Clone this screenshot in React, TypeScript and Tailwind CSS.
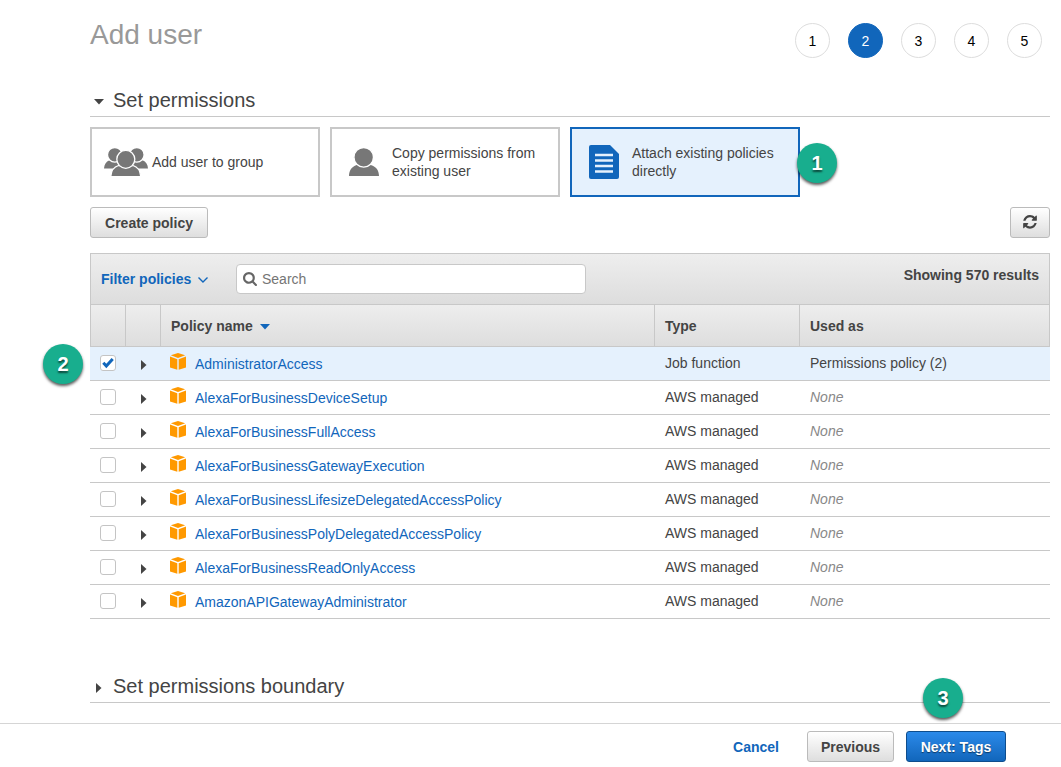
import React from "react";

const policies = [
  { name: "AdministratorAccess", type: "Job function", used: "Permissions policy (2)" },
  { name: "AlexaForBusinessDeviceSetup", type: "AWS managed" },
  { name: "AlexaForBusinessFullAccess", type: "AWS managed" },
  { name: "AlexaForBusinessGatewayExecution", type: "AWS managed" },
  { name: "AlexaForBusinessLifesizeDelegatedAccessPolicy", type: "AWS managed" },
  { name: "AlexaForBusinessPolyDelegatedAccessPolicy", type: "AWS managed" },
  { name: "AlexaForBusinessReadOnlyAccess", type: "AWS managed" },
  { name: "AmazonAPIGatewayAdministrator", type: "AWS managed" },
];

function Badge({ n, className }: { n: number; className: string }) {
  return (
    <span
      className={`absolute z-10 flex size-10 items-center justify-center rounded-full bg-[#18ae8e] text-xl font-bold text-white shadow-[0_2px_3px_rgba(0,0,0,0.65)] [text-shadow:0_2px_2px_rgba(0,0,0,0.6)] ${className}`}
    >
      {n}
    </span>
  );
}

function UserIcon() {
  return (
    <svg className="h-7 w-[30px]" viewBox="0 0 30 28" fill="#777" aria-hidden="true">
      <path d="M7 17.200Q14.700 14 22.500 17.200C27.500 18.800 30 23 30 28H0C0 23 2.500 18.800 7 17.200z" />
      <circle cx="14.700" cy="9.300" r="9.800" stroke="#fff" strokeWidth="1.400" />
    </svg>
  );
}

function GroupIcon() {
  return (
    <svg className="h-7 w-11" viewBox="0 0 44 28" aria-hidden="true">
      <g fill="#777">
        <path d="M0 20.500c.2-4 2-7 5.500-8.300h10V20.500z" />
        <path d="M44 20.500c-.2-4-2-7-5.500-8.300h-10V20.500z" />
      </g>
      <g fill="#777" stroke="#fff" strokeWidth="1.300">
        <circle cx="10.800" cy="6.800" r="7.300" />
        <circle cx="32.800" cy="6.800" r="7.300" />
        <path d="M6.800 29c.2-5.500 2.700-9.900 7.700-11.500h14.500c5 1.600 7.500 6 7.700 11.500z" />
        <circle cx="21.800" cy="11.300" r="9" />
      </g>
    </svg>
  );
}

function DocIcon() {
  return (
    <svg className="h-[34px] w-[30px]" viewBox="0 0 30 34" aria-hidden="true">
      <path d="M2 0h19l9 9v23a2 2 0 0 1-2 2H2a2 2 0 0 1-2-2V2a2 2 0 0 1 2-2z" fill="#1166bb" />
      <path d="M6 10h18M6 15.500h18M6 21h18M6 26.500h18" stroke="#e5f1fd" strokeWidth="2.400" />
    </svg>
  );
}

function CubeIcon() {
  return (
    <svg className="h-[17px] w-4" viewBox="0 0 16 17" fill="#ff9900" aria-hidden="true">
      <path d="M0 3.400L7.300 6.300V16.700L0 14.400z" />
      <path d="M16 3.400L8.700 6.300V16.700L16 14.400z" />
      <path d="M.8 2.200L8 0l7.200 2.200L8 4.900z" />
    </svg>
  );
}

function RightArrow() {
  return (
    <svg className="h-[10px] w-[6px]" viewBox="0 0 6 10" fill="#444" aria-hidden="true">
      <path d="M0 0l5.500 5L0 10z" />
    </svg>
  );
}

function DownArrow() {
  return (
    <svg className="h-[6px] w-[10px]" viewBox="0 0 10 6" fill="currentColor" aria-hidden="true">
      <path d="M0 0h10L5 5.500z" />
    </svg>
  );
}

const grayButton =
  "flex h-[31px] items-center justify-center rounded-[3px] border border-[#bbb] bg-linear-to-b from-white to-[#dedede] font-bold text-[#444]";
const headCell = "border-y border-r border-[#c8c8c8] p-0 text-left font-bold";
const bar = "bg-linear-to-b from-[#eeeeee] to-[#dddddd]";

export default function App() {
  return (
    <div className="bg-white font-['Liberation_Sans',Arial,sans-serif] text-sm text-[#444]">
      <main className="pr-[11px] pl-[90px]">
        <header className="flex h-[84px] items-start justify-between">
          <h1 className="pt-[19px] text-[28px] leading-8 text-[#999]">Add user</h1>
          <ol className="flex gap-[18px] pt-[23px] pr-2">
            {[1, 2, 3, 4, 5].map((n) => (
              <li
                key={n}
                aria-current={n === 2 ? "step" : undefined}
                className={`flex size-[35px] items-center justify-center rounded-full border ${
                  n === 2 ? "border-[#1166bb] bg-[#1166bb] text-white" : "border-[#ddd] text-black"
                }`}
              >
                {n}
              </li>
            ))}
          </ol>
        </header>

        <h2 className="border-b border-[#c8c8c8] pb-px text-xl">
          <button type="button" aria-expanded="true" className="flex h-[31px] w-full items-center">
            <span className="flex w-[23px] pt-1 pl-1">
              <DownArrow />
            </span>
            Set permissions
          </button>
        </h2>

        <div className="mt-[10px] flex gap-[10px]">
          <button
            type="button"
            className="flex h-[70px] w-[230px] items-center border-2 border-[#c8c8c8] text-left leading-[18px]"
          >
            <span className="flex w-[60px] justify-end pr-1">
              <GroupIcon />
            </span>
            <span>Add user to group</span>
          </button>
          <button
            type="button"
            className="flex h-[70px] w-[230px] items-center border-2 border-[#c8c8c8] text-left leading-[18px]"
          >
            <span className="flex w-[60px] shrink-0 pl-[17px]">
              <UserIcon />
            </span>
            <span className="pr-4">Copy permissions from existing user</span>
          </button>
          <div className="relative">
            <button
              type="button"
              aria-pressed="true"
              className="flex h-[70px] w-[230px] items-center border-2 border-[#1166bb] bg-[#e5f1fd] text-left leading-[18px]"
            >
              <span className="flex w-[60px] shrink-0 pl-[17px]">
                <DocIcon />
              </span>
              <span className="pr-4">Attach existing policies directly</span>
            </button>
            <Badge n={1} className="top-4 -right-[37px]" />
          </div>
        </div>

        <div className="mt-[10px] flex justify-between">
          <button type="button" className={`${grayButton} w-[118px]`}>
            Create policy
          </button>
          <button type="button" aria-label="Refresh" className={`${grayButton} w-10`}>
            <svg className="h-4 w-[14px]" viewBox="0 0 1536 1792" fill="#444" aria-hidden="true">
              <path d="M1511 928q0 5-1 7-64 268-268 434.500t-478 166.500q-146 0-282.500-55t-243.500-157l-129 129q-19 19-45 19t-45-19-19-45v-448q0-26 19-45t45-19h448q26 0 45 19t19 45-19 45l-137 137q71 66 161 102t187 36q134 0 250-65t186-179q11-17 53-117 8-23 30-23h192q13 0 22.500 9.500t9.500 22.500zm25-800v448q0 26-19 45t-45 19h-448q-26 0-45-19t-19-45 19-45l138-138q-148-137-349-137-134 0-250 65t-186 179q-11 17-53 117-8 23-30 23h-199q-13 0-22.500-9.500t-9.500-22.500v-7q65-268 270-434.500t480-166.500q146 0 284 55.500t245 156.500l130-129q19-19 45-19t45 19 19 45z" />
            </svg>
          </button>
        </div>

        <div className={`mt-[15px] flex h-[51px] items-center border border-b-0 border-[#c8c8c8] pr-[10px] pl-[10px] ${bar}`}>
          <button type="button" className="flex w-[135px] items-center gap-[7px] font-bold text-[#1166bb]">
            Filter policies
            <svg className="mt-[2px] h-[6px] w-[10px]" viewBox="0 0 10 6" fill="none" stroke="#1166bb" strokeWidth="1.400" aria-hidden="true">
              <path d="M.5.5L5 5 9.500.5" />
            </svg>
          </button>
          <label className="flex h-[30px] w-[350px] items-center gap-[5px] rounded border border-[#c8c8c8] bg-white px-[6px]">
            <svg className="size-[14px] shrink-0" viewBox="64 128 1664 1664" fill="#666" aria-hidden="true">
              <path d="M1216 832q0-185-131.500-316.500t-316.500-131.500-316.500 131.500-131.500 316.500 131.500 316.500 316.500 131.500 316.500-131.500 131.500-316.500zm512 832q0 52-38 90t-90 38q-54 0-90-38l-343-342q-179 124-399 124-143 0-273.500-55.500t-225-150-150-225-55.500-273.500 55.500-273.500 150-225 225-150 273.500-55.500 273.500 55.500 225 150 150 225 55.500 273.500q0 220-124 399l343 343q37 37 37 90z" />
            </svg>
            <input
              type="text"
              aria-label="Search"
              placeholder="Search"
              className="w-full bg-transparent outline-none placeholder:text-[#757575]"
            />
          </label>
          <p className="ml-auto pb-2 font-bold">Showing 570 results</p>
        </div>

        <table className="w-full table-fixed border-separate border-spacing-0">
          <thead>
            <tr className={`h-[43px] ${bar}`}>
              <th className={`${headCell} w-9 border-l`} aria-label="Select" />
              <th className={`${headCell} w-[35px]`} aria-label="Expand" />
              <th className={headCell}>
                <button type="button" className="flex items-center gap-[7px] pl-[10px] font-bold">
                  Policy name
                  <span className="pt-[2px] text-[#1166bb]">
                    <DownArrow />
                  </span>
                </button>
              </th>
              <th className={`${headCell} w-[145px] pl-[10px]`}>Type</th>
              <th className={`${headCell} w-[250px] pl-[10px]`}>Used as</th>
            </tr>
          </thead>
          <tbody>
            {policies.map((p, i) => (
              <tr key={p.name} className={`h-[34px] *:border-b *:border-[#c8c8c8] *:p-0 ${i === 0 ? "bg-[#e5f1fd]" : ""}`}>
                <td className="relative">
                  <span className="flex pb-[2px] pl-[10px]">
                    <span className="grid size-4">
                      <input
                        type="checkbox"
                        defaultChecked={i === 0}
                        aria-label={`Select ${p.name}`}
                        className="peer col-start-1 row-start-1 size-4 appearance-none rounded-[3px] border border-[#c4c4c4] bg-white"
                      />
                      <svg
                        className="pointer-events-none col-start-1 row-start-1 hidden size-4 peer-checked:block"
                        viewBox="0 0 16 16"
                        fill="none"
                        stroke="#1166bb"
                        strokeWidth="3"
                        aria-hidden="true"
                      >
                        <path d="M3.300 7.800l3 3.200 6.400-7" />
                      </svg>
                    </span>
                  </span>
                  {i === 0 && <Badge n={2} className="-top-[3px] -left-[47px]" />}
                </td>
                <td>
                  <button type="button" aria-label={`Expand ${p.name}`} className="flex pt-[2px] pl-[15px]">
                    <RightArrow />
                  </button>
                </td>
                <td>
                  <span className="flex items-center gap-[9px] pl-[9px]">
                    <span className="pb-1">
                      <CubeIcon />
                    </span>
                    <a href="#" className="pt-px text-[#1166bb]">
                      {p.name}
                    </a>
                  </span>
                </td>
                <td>
                  <span className="block pb-[2px] pl-[10px]">{p.type}</span>
                </td>
                <td>
                  <span className="block pb-[2px] pl-[10px]">{p.used ?? <em className="text-[#888]">None</em>}</span>
                </td>
              </tr>
            ))}
          </tbody>
        </table>

        <h2 className="mt-[51px] border-b border-[#c8c8c8] pb-px text-xl">
          <button type="button" aria-expanded="false" className="flex h-[31px] w-full items-center">
            <span className="flex w-[23px] pt-1 pl-[6px]">
              <RightArrow />
            </span>
            Set permissions boundary
          </button>
        </h2>
      </main>

      <footer className="mt-5 flex justify-end gap-3 border-t border-[#d5d5d5] pt-[7px] pr-[55px] pb-[5px]">
        <button type="button" className="px-4 font-bold text-[#1166bb]">
          Cancel
        </button>
        <button type="button" className={`${grayButton} w-[87px]`}>
          Previous
        </button>
        <div className="relative">
          <button
            type="button"
            className="flex h-[31px] w-[100px] items-center justify-center rounded-[3px] border border-[#0e4d8d] bg-linear-to-b from-[#2b8aea] to-[#1166bb] font-bold text-white [text-shadow:0_1px_1px_rgba(0,0,0,0.5)]"
          >
            Next: Tags
          </button>
          <Badge n={3} className="-top-[53px] left-[17px]" />
        </div>
      </footer>
    </div>
  );
}
